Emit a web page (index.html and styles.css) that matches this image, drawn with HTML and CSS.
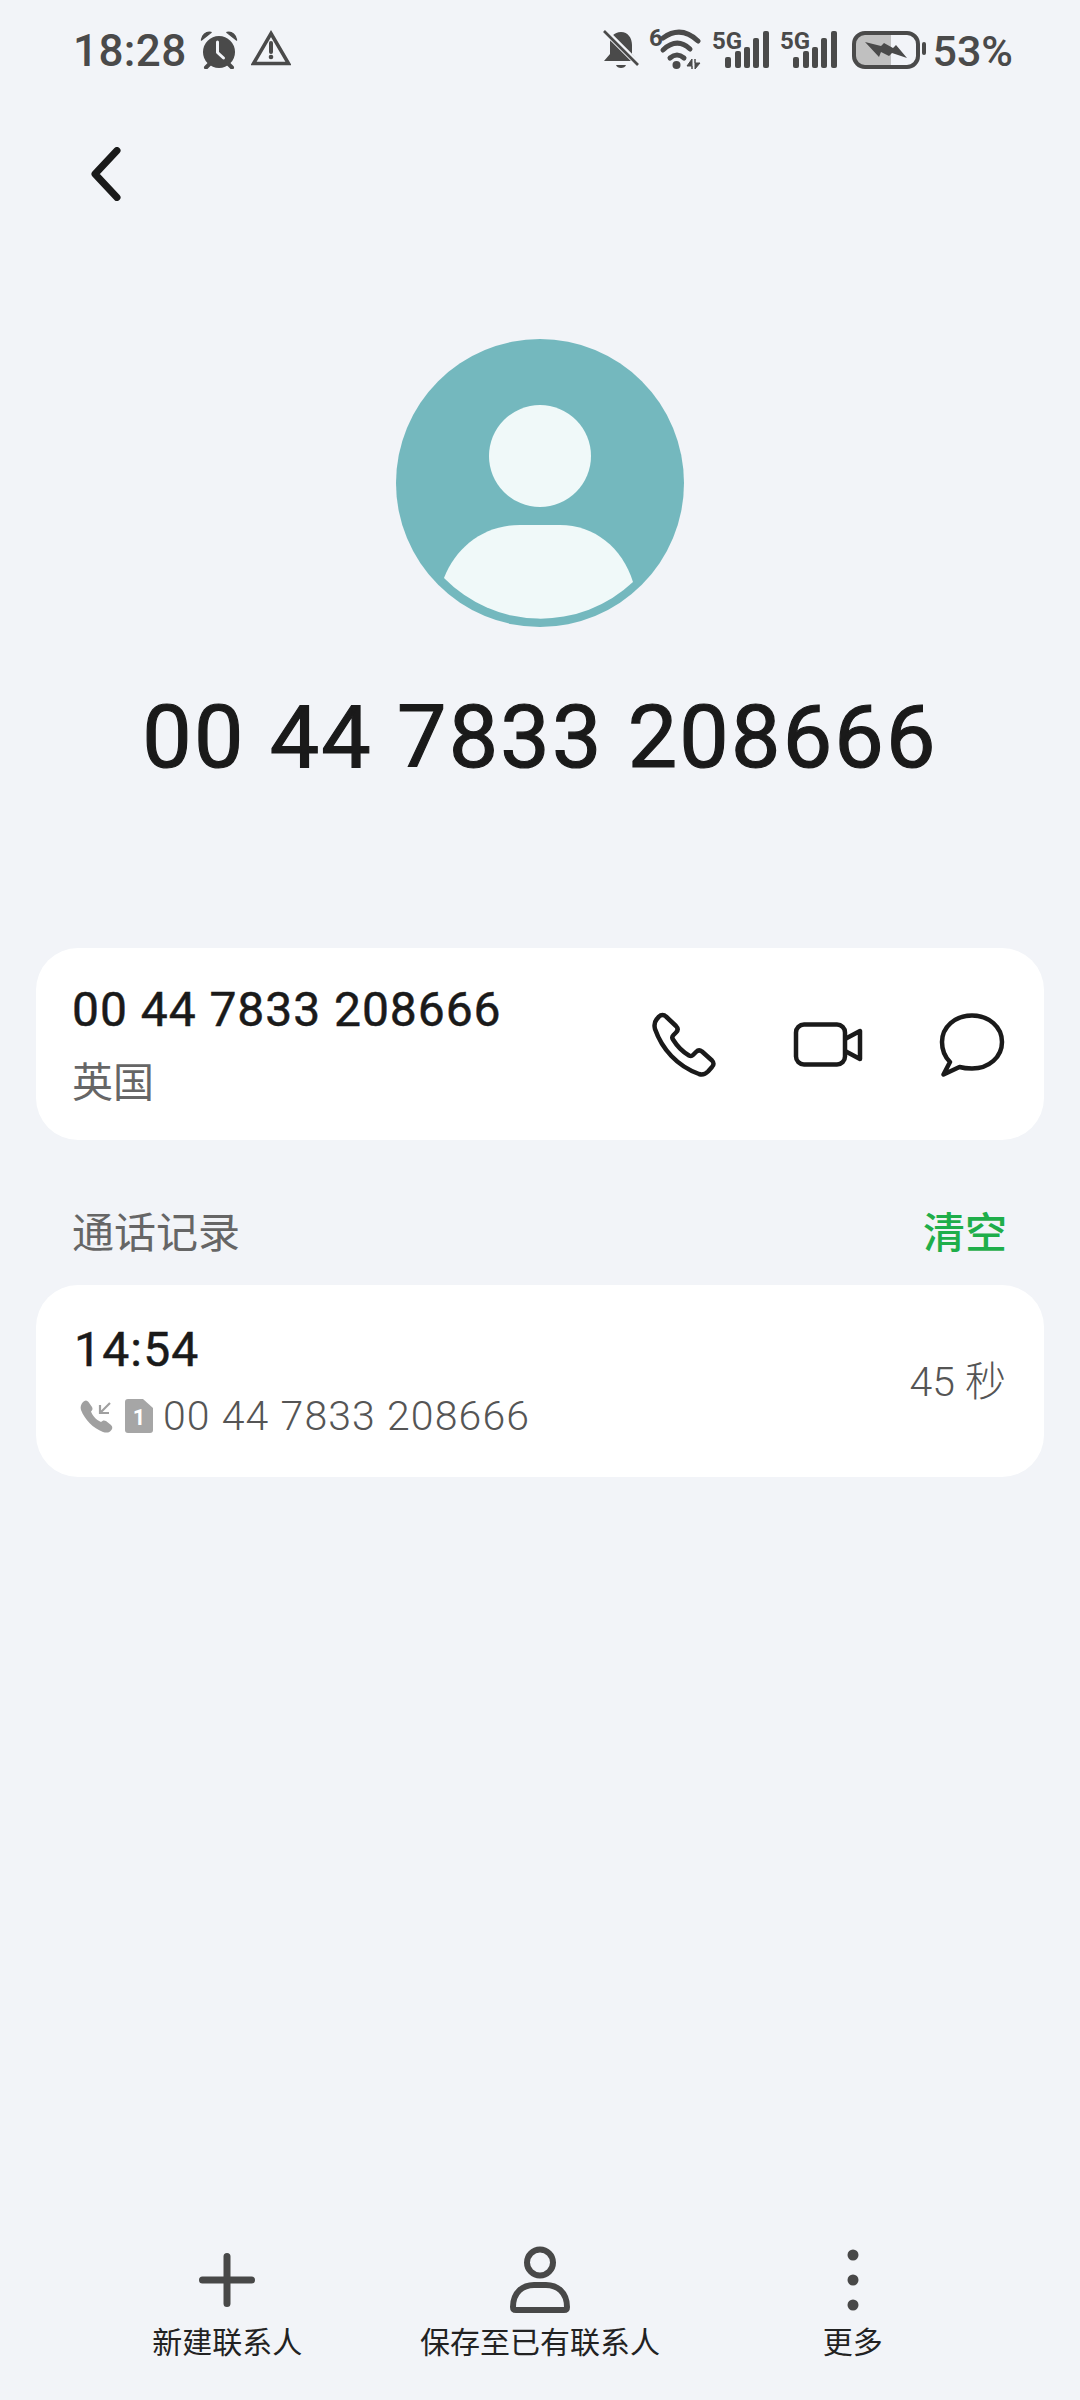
FILE: index.html
```html
<!DOCTYPE html>
<html lang="zh">
<head>
    <meta charset="UTF-8">
    <meta name="viewport" content="width=device-width, initial-scale=1.0">
    <title>通话详情</title>
    <link rel="stylesheet" href="styles.css">
</head>
<body>
    <header class="status-bar">
        <div class="status-left">
            <span class="clock">18:28</span>
            <svg class="alarm" width="38" height="38" viewBox="0 0 38 38">
                <circle cx="19" cy="21" r="16" fill="#4a4a4a"/>
                <path d="M1.500 9 C2 4 6 0.500 11 1.500 Z M36.500 9 C36 4 32 0.500 27 1.500 Z" fill="#4a4a4a" stroke="#4a4a4a" stroke-width="1.500" stroke-linejoin="round"/>
                <path d="M6 36.500 L9.500 33 M32 36.500 L28.500 33" stroke="#4a4a4a" stroke-width="4" stroke-linecap="round"/>
                <path d="M17.500 11 V21.500 L23.500 27" fill="none" stroke="#f2f4f8" stroke-width="3" stroke-linecap="round" stroke-linejoin="round"/>
            </svg>
            <svg class="warning" width="40" height="36" viewBox="0 0 40 36">
                <path d="M20 3.500 L37.500 33.500 H2.500 Z" fill="none" stroke="#4a4a4a" stroke-width="3.500" stroke-linejoin="miter"/>
                <path d="M20 13 V22" stroke="#4a4a4a" stroke-width="4" stroke-linecap="round"/>
                <circle cx="20" cy="27" r="2.300" fill="#4a4a4a"/>
            </svg>
        </div>
        <div class="status-right">
            <svg width="36" height="42" viewBox="0 0 36 42">
                <path d="M18 3 C25 3 29 9 29 16 V25 L35 32 H1 L7 25 V14 C7 8 11 3 18 3 Z" fill="#4a4a4a"/>
                <path d="M13 36 H23 C22 40 14 40 13 36 Z" fill="#4a4a4a"/>
                <path d="M-2 -2 L38 38" stroke="#f2f4f8" stroke-width="6"/>
                <path d="M1 2 L35 36" stroke="#4a4a4a" stroke-width="2.600"/>
            </svg>
            <svg width="53" height="52" viewBox="0 -4 53 52">
                <text x="0" y="18" class="mini-label">6</text>
                <path d="M14 10 Q32 -3 49 13" fill="none" stroke="#4a4a4a" stroke-width="5" stroke-linecap="round"/>
                <path d="M14 22 Q28 9 41 21" fill="none" stroke="#4a4a4a" stroke-width="5" stroke-linecap="round"/>
                <path d="M21 30 Q28 24 35 30" fill="none" stroke="#4a4a4a" stroke-width="5" stroke-linecap="round"/>
                <circle cx="27.500" cy="37" r="4" fill="#4a4a4a"/>
                <path d="M43 41 V31 L38 38 H43 Z M46 31 V41 L51 35 H46 Z" fill="#4a4a4a" stroke="#4a4a4a" stroke-width="1"/>
            </svg>
            <svg width="58" height="50" viewBox="0 -4 58 50">
                <text x="0" y="20" class="mini-label">5G</text>
                <rect x="13" y="28" width="6" height="11" rx="2" fill="#4a4a4a"/>
                <rect x="23" y="22" width="6" height="17" rx="2" fill="#4a4a4a"/>
                <rect x="32" y="18" width="6" height="21" rx="2" fill="#4a4a4a"/>
                <rect x="41" y="9" width="6" height="30" rx="2" fill="#4a4a4a"/>
                <rect x="51" y="2" width="6" height="37" rx="2" fill="#4a4a4a"/>
            </svg>
            <svg width="58" height="50" viewBox="0 -4 58 50">
                <text x="0" y="20" class="mini-label">5G</text>
                <rect x="13" y="28" width="6" height="11" rx="2" fill="#4a4a4a"/>
                <rect x="23" y="22" width="6" height="17" rx="2" fill="#4a4a4a"/>
                <rect x="32" y="18" width="6" height="21" rx="2" fill="#4a4a4a"/>
                <rect x="41" y="9" width="6" height="30" rx="2" fill="#4a4a4a"/>
                <rect x="51" y="2" width="6" height="37" rx="2" fill="#4a4a4a"/>
            </svg>
            <svg class="battery" width="74" height="38" viewBox="0 0 74 38">
                <path d="M12 3 H39 V35 H12 C6 35 2 31 2 25 V13 C2 7 6 3 12 3 Z" fill="#c0c0c0"/>
                <rect x="2" y="2" width="64" height="34" rx="11" fill="none" stroke="#4a4a4a" stroke-width="4"/>
                <rect x="70" y="11" width="4" height="13" rx="2" fill="#4a4a4a"/>
                <path d="M13 11 L29 15 L32 12 L41 17 L44 14 L55 27 L40 22 L37 25 L29 21 L27 26 Z" fill="#4a4a4a"/>
            </svg>
            <span class="battery-text">53%</span>
        </div>
    </header>

    <nav class="top-nav">
        <svg width="30" height="54" viewBox="0 0 30 54">
            <path d="M26 3.500 L4 27 L26 50.500" fill="none" stroke="#1a1a1a" stroke-width="7" stroke-linecap="round" stroke-linejoin="round"/>
        </svg>
    </nav>

    <section class="profile">
        <svg class="avatar" width="288" height="288" viewBox="0 0 288 288">
            <circle cx="144" cy="144" r="144" fill="#74b8be"/>
            <circle cx="144" cy="117" r="51" fill="#f0f9f9"/>
            <path d="M48 239 C60 208 88 186 124 186 H164 C198 186 226 208 237 243 A135 135 0 0 1 48 239 Z" fill="#f0f9f9"/>
        </svg>
        <h1 class="number-title">00 44 7833 208666</h1>
    </section>

    <main class="content">
        <div class="card number-card">
            <div class="number-info">
                <div class="number-main">00 44 7833 208666</div>
                <div class="number-place">英国</div>
            </div>
            <div class="actions">
                <svg class="act-phone" width="66" height="66" viewBox="0 0 66 66">
                    <path d="M7 4.500 C9 2.500 12 2.500 14 4.500 L24 14 C26.500 16.500 26 18.500 24 20.500 L21.500 23 C20 24.500 20 26 21 27.500 C25 34 31 40 37 43.500 C38.500 44.300 40 44 41 43 L44 40 C46 38 48 38 50 39.500 L60 48.500 C62 50.500 62 53 60 55 L56 59.500 C53 62.500 50 63 47 62 C25 54 10 37 3 17 C2 13 2.500 10 4.500 7.500 Z" fill="none" stroke="#1a1a1a" stroke-width="4.500" stroke-linejoin="round"/>
                </svg>
                <svg class="act-video" width="70" height="46" viewBox="0 0 70 46">
                    <rect x="3" y="2.500" width="49" height="40" rx="8" fill="none" stroke="#1a1a1a" stroke-width="4.500"/>
                    <path d="M52 17 L67 9 V37 L52 29" fill="none" stroke="#1a1a1a" stroke-width="4.500" stroke-linejoin="round"/>
                </svg>
                <svg class="act-chat" width="68" height="66" viewBox="0 0 68 66">
                    <path d="M12 50 C6 44 4 38 4 30 C4 15 17 3.500 34 3.500 C51 3.500 64 15 64 30 C64 45 51 56.500 34 56.500 C29 56.500 25 56 21.500 55 L5.500 62.500 Z" fill="none" stroke="#1a1a1a" stroke-width="4.500" stroke-linejoin="round"/>
                </svg>
            </div>
        </div>

        <div class="section-head">
            <span class="section-title">通话记录</span>
            <span class="section-clear">清空</span>
        </div>

        <div class="card log-card">
            <div class="log-info">
                <div class="log-time">14:54</div>
                <div class="log-sub">
                    <svg width="33" height="33" viewBox="0 0 33 33">
                        <path d="M3 2 C5 0 7 0 8.500 2 L12 7 C13 9 12.500 10 11 11.500 C12 15 16 20 21 22 C22.500 20.500 24 20 26 21 L31 25 C33 27 32.500 29 31 30.500 C29 33 26 33 23 32 C13 28 5 20 1 10 C0 7 1 4 3 2 Z" fill="#a0a0a0"/>
                        <path d="M30 3 L20 13 M20 5 V13 H29" fill="none" stroke="#a0a0a0" stroke-width="2.200"/>
                    </svg>
                    <svg class="sim" width="28" height="34" viewBox="0 0 28 34">
                        <path d="M3 0 H18 L28 9 V31 C28 33 27 34 25 34 H3 C1 34 0 33 0 31 V3 C0 1 1 0 3 0 Z" fill="#a6a6a6"/>
                        <text x="14" y="26" class="sim-label">1</text>
                    </svg>
                    <span class="log-number">00 44 7833 208666</span>
                </div>
            </div>
            <div class="log-duration">45 秒</div>
        </div>
    </main>

    <footer class="bottom-bar">
        <div class="bottom-item">
            <svg width="56" height="70" viewBox="0 0 56 70">
                <path d="M28 11.500 V58.500 M3.500 35 H52.500" stroke="#484848" stroke-width="7" stroke-linecap="round"/>
            </svg>
            <span>新建联系人</span>
        </div>
        <div class="bottom-item">
            <svg width="62" height="70" viewBox="0 0 62 70">
                <circle cx="31" cy="17.500" r="13" fill="none" stroke="#484848" stroke-width="6"/>
                <path d="M4 62 C4 47 14 40 25 40 H37 C48 40 58 47 58 62 C58 64 57 65 55 65 H7 C5 65 4 64 4 62 Z" fill="none" stroke="#484848" stroke-width="6" stroke-linejoin="round"/>
            </svg>
            <span>保存至已有联系人</span>
        </div>
        <div class="bottom-item">
            <svg width="12" height="70" viewBox="0 0 12 70">
                <circle cx="6" cy="10" r="5.500" fill="#484848"/>
                <circle cx="6" cy="35" r="5.500" fill="#484848"/>
                <circle cx="6" cy="60" r="5.500" fill="#484848"/>
            </svg>
            <span>更多</span>
        </div>
    </footer>
</body>
</html>
```

FILE: styles.css
```css
* {
    box-sizing: border-box;
}

body {
    margin: 0;
    width: 1080px;
    height: 2400px;
    display: flex;
    flex-direction: column;
    background-color: #f2f4f8;
    font-family: Roboto, "Noto Sans CJK SC", sans-serif;
    overflow: hidden;
}

svg {
    display: block;
    flex-shrink: 0;
}

.status-bar {
    height: 100px;
    padding: 0 67px 0 73px;
    display: flex;
    justify-content: space-between;
    align-items: center;
    color: #4a4a4a;
}

.status-left, .status-right {
    display: flex;
    align-items: center;
}

.status-right {
    gap: 10px;
}

.clock {
    font-size: 44px;
    font-weight: 500;
    line-height: 52px;
    letter-spacing: 0.4px;
    padding-top: 2px;
}

.alarm {
    margin-left: 13px;
}

.warning {
    margin-left: 13px;
    margin-top: -4px;
}

.mini-label {
    font-family: "Liberation Sans Narrow", Roboto, sans-serif;
    font-size: 24px;
    font-weight: 700;
    fill: #4a4a4a;
}

.battery {
    margin-left: 4px;
}

.battery-text {
    font-size: 43px;
    font-weight: 500;
    line-height: 52px;
    margin-left: -4px;
    padding-top: 2px;
}

.top-nav {
    height: 101px;
    padding: 47px 0 0 91px;
}

.profile {
    margin-top: 138px;
    display: flex;
    flex-direction: column;
    align-items: center;
}

.number-title {
    margin: 50px 0 0;
    height: 120px;
    font-size: 88px;
    font-weight: 400;
    line-height: 120px;
    letter-spacing: 2.2px;
    -webkit-text-stroke: 1.2px #1a1a1a;
    color: #1a1a1a;
}

.content {
    margin-top: 151px;
    padding: 0 36px;
}

.card {
    height: 192px;
    background-color: #fff;
    border-radius: 42px;
    display: flex;
    align-items: center;
    justify-content: space-between;
}

.number-card {
    padding: 0 38px 0 36px;
}

.number-main {
    font-size: 48px;
    font-weight: 400;
    line-height: 60px;
    letter-spacing: 0.95px;
    -webkit-text-stroke: 0.5px #1a1a1a;
    color: #1a1a1a;
    padding-top: 5px;
}

.number-place {
    margin-top: 13px;
    font-size: 41px;
    line-height: 60px;
    color: #666;
}

.actions {
    display: flex;
    align-items: center;
    margin-top: 2px;
}

.act-phone {
    margin-right: 75px;
}

.act-video {
    margin-right: 75px;
}

.section-head {
    height: 145px;
    padding: 66px 37px 0 36px;
    display: flex;
    justify-content: space-between;
    font-size: 42px;
    line-height: 56px;
}

.section-title {
    color: #666;
}

.section-clear {
    color: #1fae4a;
    font-weight: 500;
}

.log-card {
    padding: 0 38px 0 38px;
}

.log-time {
    font-size: 48px;
    font-weight: 400;
    line-height: 60px;
    letter-spacing: 1.2px;
    -webkit-text-stroke: 0.5px #1a1a1a;
    color: #1a1a1a;
}

.log-sub {
    margin-top: 10px;
    display: flex;
    align-items: center;
    height: 52px;
    padding-left: 6px;
}

.sim {
    margin-left: 12px;
}

.sim-label {
    font-family: Roboto, sans-serif;
    font-size: 22px;
    font-weight: 700;
    fill: #fff;
    text-anchor: middle;
}

.log-number {
    margin-left: 10px;
    font-size: 41px;
    font-weight: 300;
    line-height: 52px;
    letter-spacing: 1.1px;
    color: #555;
}

.log-duration {
    font-size: 41px;
    font-weight: 300;
    color: #555;
    margin-top: -6px;
}

.bottom-bar {
    margin-top: auto;
    padding: 0 71px 37px;
    display: grid;
    grid-template-columns: repeat(3, 1fr);
}

.bottom-item {
    display: flex;
    flex-direction: column;
    align-items: center;
    font-size: 30px;
    line-height: 40px;
    color: #222;
}

.bottom-item span {
    margin-top: 8px;
}
```
